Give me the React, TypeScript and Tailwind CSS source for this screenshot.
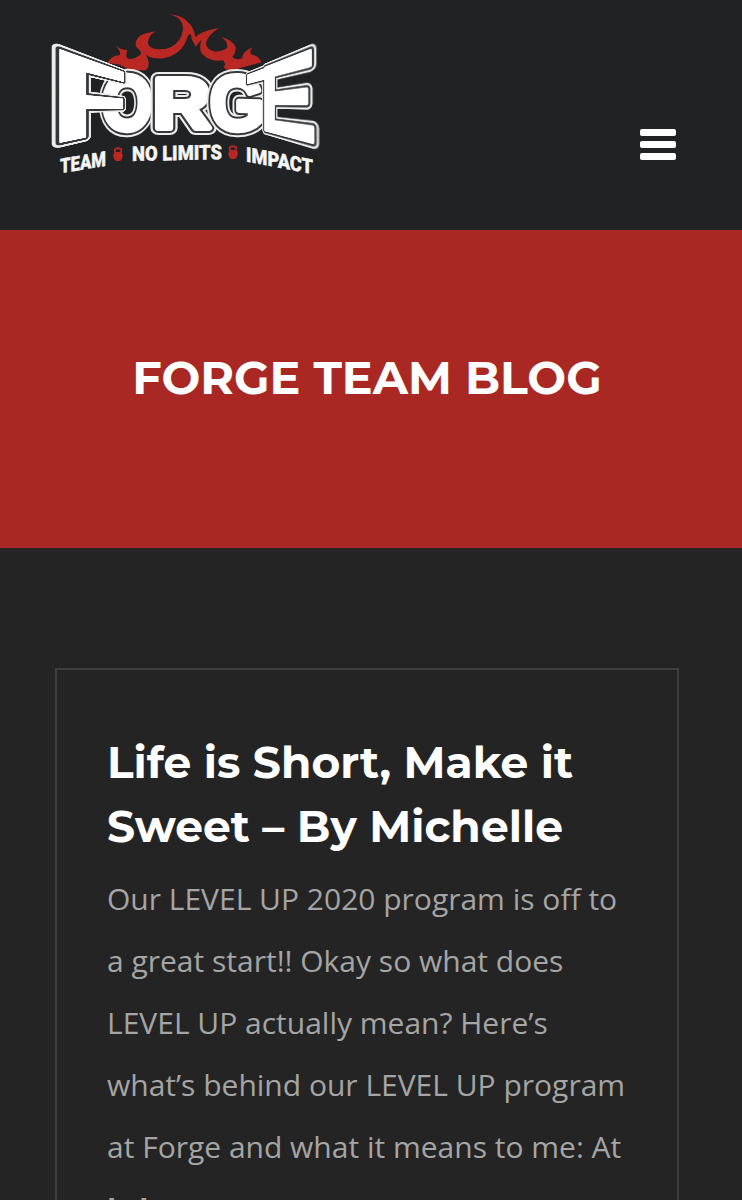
import type { ReactNode } from "react";

const HEADING = "font-['Montserrat',sans-serif] font-bold text-white";

const middle = [
  { ch: "O", size: 77, transform: "matrix(0.84 -0.02 0 1 102 130)" },
  { ch: "R", size: 71, transform: "matrix(1.12 0 0 1 153 128)" },
  { ch: "G", size: 77, transform: "matrix(0.9 0.02 0 1 210 129)" },
];

const tagline = [
  { text: "TEAM", width: 46, transform: "matrix(1 -0.17 0 1 60 173.5)" },
  { text: "NO LIMITS", width: 90, transform: "matrix(1 -0.02 0 1 132 161)" },
  { text: "IMPACT", width: 67, transform: "matrix(1 0.19 0 1 246 161.5)" },
];

const excerpt = [
  "Our LEVEL UP 2020 program is off to",
  "a great start!! Okay so what does",
  "LEVEL UP actually mean? Here’s",
  "what’s behind our LEVEL UP program",
  "at Forge and what it means to me: At",
];

// white rim, dark line, white face
function Rimmed({ face, line = 4, children }: { face: number; line?: number; children: ReactNode }) {
  return (
    <g fontFamily="Liberation Sans, Arial, sans-serif" fontWeight="700" strokeLinejoin="round">
      <g fill="#ececec" stroke="#ececec" strokeWidth={face + line * 2}>{children}</g>
      <g fill="#35373a" stroke="#35373a" strokeWidth={face + line} aria-hidden="true">{children}</g>
      <g fill="#fff" stroke="#fff" strokeWidth={face} aria-hidden="true">{children}</g>
    </g>
  );
}

function Kettlebell({ x, y }: { x: number; y: number }) {
  return (
    <g transform={`translate(${x} ${y})`}>
      <path d="M-3 -1 L-3.3 -4.5 Q0 -7 3.3 -4.5 L3 -1" fill="none" stroke="#b92822" strokeWidth="1.8" />
      <path d="M-3 -2 H3 L4.8 1 L4 5 L2 7 H-2 L-4 5 L-4.8 1 Z" fill="#b92822" />
    </g>
  );
}

function Logo() {
  return (
    <div className="relative h-[160px] w-[268px]">
      <svg className="block size-full overflow-visible" viewBox="52 14 268 160">
        <path
          transform="translate(100 8) scale(.33333)"
          fill="#b92822"
          d="M22 164 Q34 143 58 142 Q66 136 47 112 Q61 127 82 125 Q76 142 82 151 Q99 157 119 142 Q130 134 111 119 Q99 104 119 84 Q133 75 167 70 Q143 84 144 106 Q147 123 176 124 Q218 126 239 94 Q259 57 238 34 Q225 22 205 19 Q246 21 263 42 Q282 57 286 87 Q307 68 357 60 Q323 82 318 104 Q318 126 348 131 Q389 125 381 111 Q380 96 363 87 Q395 94 407 117 Q409 132 397 147 Q407 158 427 151 Q424 134 457 118 Q445 134 457 141 Q477 143 484 163 L385 190 L370 176 Q381 171 369 157 Q335 163 309 141 Q294 126 305 94 L287 116 L275 94 Q273 65 262 88 Q247 141 189 151 Q158 154 138 141 Q155 169 138 187 L90 187 L60 170 Z"
        />
        {middle.map((l) => (
          <g key={l.ch} transform={l.transform} fontSize={l.size}>
            <Rimmed face={6}>
              <text>{l.ch}</text>
            </Rimmed>
          </g>
        ))}
        {tagline.map((t) => (
          <text
            key={t.text}
            transform={t.transform}
            fontFamily="Roboto, sans-serif"
            fontWeight="900"
            fontSize="20.5"
            textLength={t.width}
            lengthAdjust="spacingAndGlyphs"
            fill="#f5f5f5"
            stroke="#f5f5f5"
            strokeWidth="0.4"
          >
            {t.text}
          </text>
        ))}
        <Kettlebell x={118} y={154} />
        <Kettlebell x={233} y={152} />
      </svg>
      {/* the outer letters grow towards the edges of the badge */}
      <svg
        className="absolute top-0 left-0 origin-top-left overflow-visible [transform:translate(8px,36px)_matrix3d(1.08,0.38,0,0.0065,0,0.93,0,0,0,0,1,0,0,0,0,1)]"
        width="100"
        height="100"
      >
        <g transform="matrix(1.3 0 0 1 -12 99)" fontSize="144">
          <Rimmed face={2} line={5}>
            <text>F</text>
          </Rimmed>
        </g>
      </svg>
      <svg
        className="absolute top-0 left-0 origin-top-right overflow-visible [transform:translate(180px,37px)_matrix3d(1.05,-0.39,0,-0.0072,0,0.92,0,0,0,0,1,0,0,0,0,1)]"
        width="80"
        height="100"
        viewBox="-80 0 80 100"
      >
        <Rimmed face={4} line={5}>
          <rect x="-110" y="1" width="60" height="15" />
          <text transform="matrix(0.825 0 0 1 -74 99)" fontSize="144">E</text>
        </Rimmed>
      </svg>
    </div>
  );
}

function Header() {
  return (
    <header className="flex h-[230px] items-start justify-between bg-[#202224] pt-[14px] pr-[66px] pl-[52px]">
      <Logo />
      <button type="button" aria-label="Menu" className="mt-[115px] flex w-9 flex-col gap-[5px]">
        <span className="h-[7px] w-full rounded-[2px] bg-white" />
        <span className="h-[7px] w-full rounded-[2px] bg-white" />
        <span className="h-[7px] w-full rounded-[2px] bg-white" />
      </button>
    </header>
  );
}

export default function App() {
  return (
    <div className="h-[1200px] w-[742px] overflow-hidden bg-[#242424]">
      <Header />
      <section className="flex h-[318px] items-center justify-center bg-[#aa2823] pr-2 pb-6">
        <h1 className={`${HEADING} text-[46px] whitespace-nowrap`}>FORGE TEAM BLOG</h1>
      </section>
      <main className="px-[55px] pt-[120px]">
        <article className="h-[600px] w-[624px] border-2 border-[#3e3e3e] pt-[60px] pl-[50px]">
          <h2 className={`${HEADING} text-[44px] leading-[64px] whitespace-nowrap`}>
            Life is Short, Make it
            <br />
            Sweet – By Michelle
          </h2>
          <div className="mt-[10px] font-['Open_Sans',sans-serif] text-[30px] leading-[62px] whitespace-nowrap text-[#a5a5a5]">
            {excerpt.map((line) => (
              <p key={line}>{line}</p>
            ))}
            <p className="flex gap-[23px] pt-px font-bold">
              <span>l</span>
              <span>l</span>
            </p>
          </div>
        </article>
      </main>
    </div>
  );
}
